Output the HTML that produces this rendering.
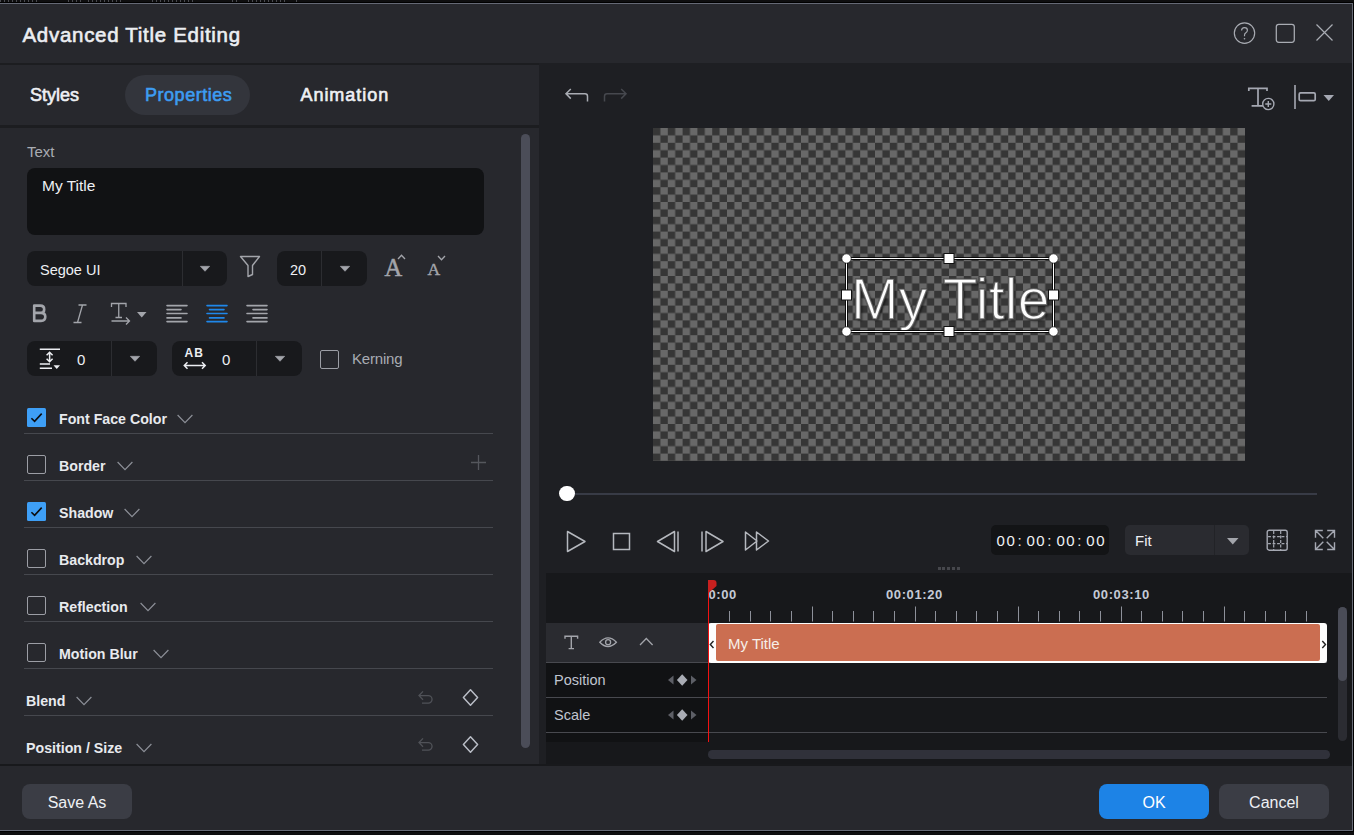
<!DOCTYPE html>
<html><head><meta charset="utf-8">
<style>
*{box-sizing:border-box;margin:0;padding:0}
html,body{width:1354px;height:835px;overflow:hidden;background:#0e0e0f}
body{position:relative;font-family:"Liberation Sans",sans-serif;color:#e6e8ee}
.a{position:absolute}
.t{line-height:1;white-space:nowrap}
svg{position:absolute;overflow:visible}
</style></head><body>
<div class="a" style="left:0;top:2px;width:1354px;height:830px;background:#000"></div>
<div class="a" style="left:0;top:0;width:340px;height:2px;background:repeating-linear-gradient(90deg,#4a4b50 0 1px,transparent 1px 4px);-webkit-mask:linear-gradient(90deg,#000 0 38px,transparent 38px 66px,#000 66px 84px,transparent 84px 86px,#000 86px 124px,transparent 124px 152px,#000 152px 196px,transparent 196px 230px,#000 230px 238px,transparent 238px 246px,#000 246px 287px,transparent 287px 294px,#000 294px 298px,transparent 298px)"></div>

<div class="a" style="left:0;top:3px;width:1353px;height:828px;background:#656975"></div>
<div class="a" style="left:0;top:4px;width:1352px;height:59px;background:#27282d"></div>
<div class="a t" style="left:22.5px;top:24.8px;font-size:20.5px;-webkit-text-stroke:0.6px #eceef2;color:#eceef2;letter-spacing:0.7px">Advanced Title Editing</div>
<svg style="left:1233px;top:21.6px" width="23" height="23"><circle cx="11.5" cy="11.1" r="10.2" fill="none" stroke="#a9acb3" stroke-width="1.15"/><path d="M8.6 8.6 Q8.6 5.6 11.5 5.6 Q14.4 5.6 14.4 8.3 Q14.4 10 12.6 11 Q11.5 11.6 11.5 13.4 V14.2" fill="none" stroke="#a9acb3" stroke-width="1.15"/><circle cx="11.5" cy="16.8" r="0.8" fill="#a9acb3"/></svg>
<svg style="left:1275.3px;top:22.6px" width="21" height="21"><rect x="1.3" y="1.3" width="18" height="18" rx="2.5" fill="none" stroke="#a9acb3" stroke-width="1.25"/></svg>
<svg style="left:1315px;top:23px" width="20" height="20"><path d="M1.5 1.5 L17.5 17.5 M17.5 1.5 L1.5 17.5" stroke="#a9acb3" stroke-width="1.2"/></svg>
<div class="a" style="left:0;top:63px;width:539px;height:2px;background:#1c1d20"></div>
<div class="a" style="left:0;top:65px;width:539px;height:60px;background:#27282d"></div>
<div class="a" style="left:0;top:125px;width:539px;height:3px;background:#1c1d20"></div>
<div class="a" style="left:0;top:128px;width:539px;height:636px;background:#27282d"></div>
<div class="a" style="left:539px;top:63px;width:813px;height:701px;background:#1e1f23"></div>
<div class="a" style="left:0;top:764px;width:1352px;height:2px;background:#18191c"></div>
<div class="a" style="left:0;top:766px;width:1352px;height:64px;background:#27282d"></div>
<div class="a" style="left:125px;top:75px;width:125px;height:40px;border-radius:20px;background:#33353c"></div>
<div class="a t" style="left:30px;top:86px;font-size:18px;-webkit-text-stroke:0.6px #eef0f4;color:#eef0f4">Styles</div>
<div class="a t" style="left:145px;top:86px;font-size:18px;-webkit-text-stroke:0.6px #3d9cf2;letter-spacing:0.53px;color:#3d9cf2">Properties</div>
<div class="a t" style="left:300.5px;top:86px;font-size:18px;-webkit-text-stroke:0.6px #eef0f4;letter-spacing:0.95px;color:#eef0f4">Animation</div>
<div class="a t" style="left:27px;top:144px;font-size:15px;color:#a9acb3">Text</div>
<div class="a" style="left:27px;top:168px;width:457px;height:67px;border-radius:8px;background:#111214"></div>
<div class="a t" style="left:42px;top:177.8px;font-size:15.5px;color:#eef0f4">My Title</div>
<div class="a" style="left:521px;top:134px;width:9px;height:614px;border-radius:4.5px;background:#4b4d58"></div>
<div class="a" style="left:27px;top:408px;width:19px;height:19px;border-radius:1.5px;background:#3e9ff6"></div>
<svg style="left:27px;top:408px" width="19" height="19"><path d="M4.4 10.2 L7.6 13.3 L14.7 5.6" fill="none" stroke="#0c0d10" stroke-width="1.6"/></svg>
<div class="a t" style="left:59px;top:411.5px;font-size:14.2px;font-weight:700;color:#e8eaee">Font Face Color</div>
<svg style="left:177px;top:413.6px" width="16" height="10"><path d="M0.6 1 L8 8.6 L15.4 1" fill="none" stroke="#8c8f97" stroke-width="1.2"/></svg>
<div class="a" style="left:24px;top:433px;width:469px;height:1px;background:#46484e"></div>
<div class="a" style="left:27px;top:455px;width:19px;height:19px;border-radius:2px;border:1.5px solid #9c9ea5"></div>
<div class="a t" style="left:59px;top:458.5px;font-size:14.2px;font-weight:700;color:#e8eaee">Border</div>
<svg style="left:117px;top:460.6px" width="16" height="10"><path d="M0.6 1 L8 8.6 L15.4 1" fill="none" stroke="#8c8f97" stroke-width="1.2"/></svg>
<div class="a" style="left:24px;top:480px;width:469px;height:1px;background:#46484e"></div>
<div class="a" style="left:27px;top:502px;width:19px;height:19px;border-radius:1.5px;background:#3e9ff6"></div>
<svg style="left:27px;top:502px" width="19" height="19"><path d="M4.4 10.2 L7.6 13.3 L14.7 5.6" fill="none" stroke="#0c0d10" stroke-width="1.6"/></svg>
<div class="a t" style="left:59px;top:505.5px;font-size:14.2px;font-weight:700;color:#e8eaee">Shadow</div>
<svg style="left:124px;top:507.6px" width="16" height="10"><path d="M0.6 1 L8 8.6 L15.4 1" fill="none" stroke="#8c8f97" stroke-width="1.2"/></svg>
<div class="a" style="left:24px;top:527px;width:469px;height:1px;background:#46484e"></div>
<div class="a" style="left:27px;top:549px;width:19px;height:19px;border-radius:2px;border:1.5px solid #9c9ea5"></div>
<div class="a t" style="left:59px;top:552.5px;font-size:14.2px;font-weight:700;color:#e8eaee">Backdrop</div>
<svg style="left:135.5px;top:554.6px" width="16" height="10"><path d="M0.6 1 L8 8.6 L15.4 1" fill="none" stroke="#8c8f97" stroke-width="1.2"/></svg>
<div class="a" style="left:24px;top:574px;width:469px;height:1px;background:#46484e"></div>
<div class="a" style="left:27px;top:596px;width:19px;height:19px;border-radius:2px;border:1.5px solid #9c9ea5"></div>
<div class="a t" style="left:59px;top:599.5px;font-size:14.2px;font-weight:700;color:#e8eaee">Reflection</div>
<svg style="left:140px;top:601.6px" width="16" height="10"><path d="M0.6 1 L8 8.6 L15.4 1" fill="none" stroke="#8c8f97" stroke-width="1.2"/></svg>
<div class="a" style="left:24px;top:621px;width:469px;height:1px;background:#46484e"></div>
<div class="a" style="left:27px;top:643px;width:19px;height:19px;border-radius:2px;border:1.5px solid #9c9ea5"></div>
<div class="a t" style="left:59px;top:646.5px;font-size:14.2px;font-weight:700;color:#e8eaee">Motion Blur</div>
<svg style="left:152.5px;top:648.6px" width="16" height="10"><path d="M0.6 1 L8 8.6 L15.4 1" fill="none" stroke="#8c8f97" stroke-width="1.2"/></svg>
<div class="a" style="left:24px;top:668px;width:469px;height:1px;background:#46484e"></div>
<div class="a t" style="left:26px;top:693.5px;font-size:14.2px;font-weight:700;color:#e8eaee">Blend</div>
<svg style="left:75.5px;top:695.6px" width="16" height="10"><path d="M0.6 1 L8 8.6 L15.4 1" fill="none" stroke="#8c8f97" stroke-width="1.2"/></svg>
<div class="a" style="left:24px;top:715px;width:469px;height:1px;background:#46484e"></div>
<div class="a t" style="left:26px;top:740.5px;font-size:14.2px;font-weight:700;color:#e8eaee">Position / Size</div>
<svg style="left:135.5px;top:742.6px" width="16" height="10"><path d="M0.6 1 L8 8.6 L15.4 1" fill="none" stroke="#8c8f97" stroke-width="1.2"/></svg>

<svg style="left:470px;top:454px" width="17" height="17"><path d="M8.5 1 V16 M1 8.5 H16" stroke="#55575d" stroke-width="1.3"/></svg>
<svg style="left:417px;top:689.5px" width="20" height="16"><path d="M2.2 5.6 H11.3 A3.75 3.75 0 0 1 11.3 13.1 H5 M6 1.4 L2 5.6 L6 9.8" fill="none" stroke="#505258" stroke-width="1.3"/></svg>
<svg style="left:461px;top:688px" width="19" height="19"><path d="M9.5 1.8 L16.6 9.5 L9.5 17.2 L2.4 9.5 Z" fill="none" stroke="#b9bdc6" stroke-width="1.5" stroke-linejoin="round"/></svg>
<svg style="left:417px;top:736.5px" width="20" height="16"><path d="M2.2 5.6 H11.3 A3.75 3.75 0 0 1 11.3 13.1 H5 M6 1.4 L2 5.6 L6 9.8" fill="none" stroke="#505258" stroke-width="1.3"/></svg>
<svg style="left:461px;top:735px" width="19" height="19"><path d="M9.5 1.8 L16.6 9.5 L9.5 17.2 L2.4 9.5 Z" fill="none" stroke="#b9bdc6" stroke-width="1.5" stroke-linejoin="round"/></svg>

<div class="a" style="left:27px;top:251px;width:200px;height:35px;border-radius:8px;background:#18191c"></div>
<div class="a" style="left:182px;top:251px;width:1px;height:35px;background:#2c2d31"></div>
<div class="a t" style="left:40px;top:262.5px;font-size:14.5px;color:#eef0f4">Segoe UI</div>
<svg style="left:200px;top:265.9px" width="10" height="6"><path d="M0.3 0.3 H9.7 L5 5.3 Z" fill="#a3a5ab" stroke="#a3a5ab" stroke-width="0.6" stroke-linejoin="round"/></svg>
<svg style="left:239px;top:255px" width="23" height="24"><path d="M1.5 1.5 H20.5 L13.5 10.5 V19.5 L9 21.5 V10.5 Z" fill="none" stroke="#a3a5ab" stroke-width="1.4" stroke-linejoin="round"/></svg>
<div class="a" style="left:277px;top:251px;width:90px;height:35px;border-radius:8px;background:#18191c"></div>
<div class="a" style="left:321px;top:251px;width:1px;height:35px;background:#2c2d31"></div>
<div class="a t" style="left:290px;top:262.5px;font-size:14.5px;color:#eef0f4">20</div>
<svg style="left:339.5px;top:265.9px" width="10" height="6"><path d="M0.3 0.3 H9.7 L5 5.3 Z" fill="#a3a5ab" stroke="#a3a5ab" stroke-width="0.6" stroke-linejoin="round"/></svg>
<div class="a t" style="left:384.5px;top:255.5px;font-family:'Liberation Serif',serif;font-size:24.5px;font-weight:400;-webkit-text-stroke:0.5px #a3a5ab;color:#a3a5ab">A</div>
<svg style="left:397px;top:254px" width="9" height="6"><path d="M1 5 L4.5 1.2 L8 5" fill="none" stroke="#a3a5ab" stroke-width="1.3"/></svg>
<div class="a t" style="left:427.5px;top:260.5px;font-family:'Liberation Serif',serif;font-size:17.5px;font-weight:400;-webkit-text-stroke:0.4px #a3a5ab;color:#a3a5ab">A</div>
<svg style="left:437px;top:255px" width="9" height="6"><path d="M1 1 L4.5 4.8 L8 1" fill="none" stroke="#a3a5ab" stroke-width="1.3"/></svg>
<svg style="left:32px;top:304px" width="16" height="20"><path d="M2.2 1.6 H8.2 Q12.2 1.6 12.2 5.4 Q12.2 8.9 8.4 8.9 H2.2 Z M2.2 8.9 H9 Q13.3 8.9 13.3 12.8 Q13.3 16.9 9 16.9 H2.2 Z" fill="none" stroke="#a3a5ab" stroke-width="2.6" stroke-linejoin="round"/></svg>
<svg style="left:72px;top:304px" width="16" height="20"><path d="M6.5 1 H14.5 M1.5 18.5 H9.5 M10.5 1 L5.5 18.5" fill="none" stroke="#a3a5ab" stroke-width="1.3"/></svg>
<svg style="left:110px;top:302px" width="22" height="24"><path d="M1.5 5 V1.5 H16 V5 M8.75 1.5 V15.5 M5.5 15.5 H12 M1.5 19 H19.5 M16 15.5 L19.5 19 L16 22.5" fill="none" stroke="#a3a5ab" stroke-width="1.3"/></svg>
<svg style="left:137px;top:312px" width="10" height="6"><path d="M0 0 H9.5 L4.75 5.5 Z" fill="#a3a5ab"/></svg>
<svg style="left:167px;top:303px" width="21" height="22"><path d="M0 2.6 H20 M0 6.6 H14 M0 10.5 H20 M0 14.9 H14 M0 18.6 H20" stroke="#a3a5ab" stroke-width="1.6" stroke-linecap="round"/></svg>
<svg style="left:207px;top:303px" width="21" height="22"><path d="M0 2.6 H20 M2.5 6.6 H17 M0 10.5 H20 M2.5 14.9 H17 M0 18.6 H20" stroke="#1f87ea" stroke-width="1.6" stroke-linecap="round"/></svg>
<svg style="left:247px;top:303px" width="21" height="22"><path d="M0 2.6 H20 M6 6.6 H20 M0 10.5 H20 M6 14.9 H20 M0 18.6 H20" stroke="#a3a5ab" stroke-width="1.6" stroke-linecap="round"/></svg>
<div class="a" style="left:27px;top:341px;width:130px;height:35px;border-radius:8px;background:#18191c"></div>
<div class="a" style="left:111px;top:341px;width:1px;height:35px;background:#2c2d31"></div>
<svg style="left:130px;top:355.9px" width="10" height="6"><path d="M0.3 0.3 H9.7 L5 5.3 Z" fill="#a3a5ab" stroke="#a3a5ab" stroke-width="0.6" stroke-linejoin="round"/></svg>
<svg style="left:38px;top:347px" width="24" height="24"><path d="M1.8 2.3 H22 M11.6 5.5 V14.5 M8.6 8.2 L11.6 5.2 L14.6 8.2 M8.6 11.8 L11.6 14.8 L14.6 11.8 M1.8 17 H12 M1.8 21.2 H14" fill="none" stroke="#eceef2" stroke-width="1.5"/><path d="M15.5 18.3 H22 L18.75 22 Z" fill="#eceef2"/></svg>
<div class="a t" style="left:77px;top:352px;font-size:15px;color:#eef0f4">0</div>
<div class="a" style="left:172px;top:341px;width:130px;height:35px;border-radius:8px;background:#18191c"></div>
<div class="a" style="left:256px;top:341px;width:1px;height:35px;background:#2c2d31"></div>
<svg style="left:275px;top:355.9px" width="10" height="6"><path d="M0.3 0.3 H9.7 L5 5.3 Z" fill="#a3a5ab" stroke="#a3a5ab" stroke-width="0.6" stroke-linejoin="round"/></svg>
<div class="a t" style="left:184.5px;top:347px;font-size:12px;font-weight:700;letter-spacing:1px;color:#eceef2">AB</div>
<svg style="left:183px;top:361px" width="24" height="9"><path d="M1.5 4.5 H22 M4.5 1.3 L1.3 4.5 L4.5 7.7 M19 1.3 L22.2 4.5 L19 7.7" fill="none" stroke="#eceef2" stroke-width="1.5"/></svg>
<div class="a t" style="left:222px;top:352px;font-size:15px;color:#eef0f4">0</div>
<div class="a" style="left:320px;top:349.5px;width:19px;height:19px;border-radius:2px;border:1.5px solid #9c9ea5"></div>
<div class="a t" style="left:352px;top:351px;font-size:15px;letter-spacing:-0.2px;color:#a9acb3">Kerning</div>

<svg style="left:564px;top:86px" width="26" height="17"><path d="M2 7.8 H21 Q23.5 7.8 23.5 10.3 V15.5 M6.8 3 L2 7.8 L6.8 12.6" fill="none" stroke="#a9acb3" stroke-width="1.5"/></svg>
<svg style="left:602px;top:86px" width="26" height="17"><path d="M24 7.8 H5 Q2.5 7.8 2.5 10.3 V15.5 M19.2 3 L24 7.8 L19.2 12.6" fill="none" stroke="#46484e" stroke-width="1.5"/></svg>
<svg style="left:1247px;top:86px" width="30" height="26"><path d="M1.8 5 V2.3 H20 V5 M11 2.3 V19.9 M4.6 19.9 H16" fill="none" stroke="#a5a8b2" stroke-width="1.7"/><circle cx="21.3" cy="18" r="5.6" fill="#1e1f23" stroke="#a5a8b2" stroke-width="1.4"/><path d="M21.3 15 V21 M18.3 18 H24.3" stroke="#a5a8b2" stroke-width="1.4"/></svg>
<svg style="left:1293px;top:84px" width="42" height="26"><path d="M2 1 V25" stroke="#a5a8b2" stroke-width="1.6"/><rect x="6.2" y="8.9" width="16" height="7.8" rx="1.3" fill="none" stroke="#a5a8b2" stroke-width="1.7"/><path d="M30.5 11 H41 L35.75 17 Z" fill="#a5a8b2"/></svg>
<svg style="left:653px;top:128px" width="592" height="333" viewBox="0 0 80 45" preserveAspectRatio="none"><defs><pattern id="ck" width="2" height="2" patternUnits="userSpaceOnUse"><rect width="2" height="2" fill="#363636"/><rect x="1" width="1" height="1" fill="#686868"/><rect y="1" width="1" height="1" fill="#686868"/></pattern></defs><rect width="80" height="45" fill="url(#ck)"/></svg>
<div class="a t" style="left:851px;top:270.5px;font-size:57px;color:#fdfdfd;letter-spacing:0.3px;-webkit-text-stroke:1.6px rgba(70,70,70,0.75);text-shadow:2px 2px 2px rgba(0,0,0,0.45)">My Title</div>
<svg style="left:835px;top:248px" width="230" height="95"><rect x="11.5" y="10.5" width="207" height="73" fill="none" stroke="#000" stroke-opacity="0.85" stroke-width="3"/><rect x="11.5" y="10.5" width="207" height="73" fill="none" stroke="#fff" stroke-width="1"/><circle cx="11.5" cy="10.5" r="4.7" fill="#fff" stroke="#111" stroke-width="0.7"/><circle cx="218.5" cy="10.5" r="4.7" fill="#fff" stroke="#111" stroke-width="0.7"/><circle cx="11.5" cy="83.5" r="4.7" fill="#fff" stroke="#111" stroke-width="0.7"/><circle cx="218.5" cy="83.5" r="4.7" fill="#fff" stroke="#111" stroke-width="0.7"/><rect x="109" y="5.5" width="10" height="10" fill="#fff" stroke="#111" stroke-width="1"/><rect x="109" y="78.5" width="10" height="10" fill="#fff" stroke="#111" stroke-width="1"/><rect x="6.5" y="42" width="10" height="10" fill="#fff" stroke="#111" stroke-width="1"/><rect x="213.5" y="42" width="10" height="10" fill="#fff" stroke="#111" stroke-width="1"/></svg>
<div class="a" style="left:567px;top:492.5px;width:750px;height:2px;background:#383b46"></div>
<div class="a" style="left:559.3px;top:485.8px;width:15.4px;height:15.4px;border-radius:50%;background:#fff"></div>
<svg style="left:565px;top:529px" width="24" height="26"><path d="M2.5 2.5 L20 12.5 L2.5 22.5 Z" fill="none" stroke="#b5b8be" stroke-width="1.5" stroke-linejoin="round"/></svg>
<svg style="left:611px;top:531px" width="21" height="21"><rect x="2.5" y="2.5" width="16" height="16" fill="none" stroke="#b5b8be" stroke-width="1.5"/></svg>
<svg style="left:655px;top:529px" width="26" height="26"><path d="M23 2.5 V22.5 M19.5 2.5 L2.5 12.5 L19.5 22.5 Z" fill="none" stroke="#b5b8be" stroke-width="1.5" stroke-linejoin="round"/></svg>
<svg style="left:699px;top:529px" width="26" height="26"><path d="M3 2.5 V22.5 M7 2.5 L24 12.5 L7 22.5 Z" fill="none" stroke="#b5b8be" stroke-width="1.5" stroke-linejoin="round"/></svg>
<svg style="left:743px;top:530px" width="30" height="24"><path d="M2.5 2 L14 11 L2.5 20 Z M13.5 2 L25.5 11 L13.5 20 Z" fill="none" stroke="#b5b8be" stroke-width="1.5" stroke-linejoin="round"/></svg>
<div class="a" style="left:991px;top:525px;width:118px;height:30px;border-radius:5px;background:#131416"></div>
<div class="a t" style="left:996.6px;top:533px;font-size:15px;letter-spacing:1.5px;color:#eef0f4">00</div>
<div class="a t" style="left:1017.4px;top:533px;font-size:15px;color:#eef0f4">:</div>
<div class="a t" style="left:1026.5px;top:533px;font-size:15px;letter-spacing:1.5px;color:#eef0f4">00</div>
<div class="a t" style="left:1047.3px;top:533px;font-size:15px;color:#eef0f4">:</div>
<div class="a t" style="left:1056.4px;top:533px;font-size:15px;letter-spacing:1.5px;color:#eef0f4">00</div>
<div class="a t" style="left:1077.2px;top:533px;font-size:15px;color:#eef0f4">:</div>
<div class="a t" style="left:1086.3px;top:533px;font-size:15px;letter-spacing:1.5px;color:#eef0f4">00</div>
<div class="a" style="left:1125px;top:525px;width:124px;height:30px;border-radius:5px;background:#2a2b30"></div>
<div class="a" style="left:1214px;top:525px;width:1px;height:30px;background:#222327"></div>
<div class="a t" style="left:1135px;top:532.5px;font-size:15px;color:#eef0f4">Fit</div>
<svg style="left:1226.5px;top:537.5px" width="12" height="7"><path d="M0 0 H11.5 L5.75 6.5 Z" fill="#a3a5ab"/></svg>
<svg style="left:1266px;top:529px" width="23" height="23"><rect x="1.2" y="1.2" width="20" height="20" rx="2" fill="none" stroke="#a5a8b2" stroke-width="1.4"/><path d="M7.7 1.5 V21 M14.7 1.5 V21 M1.5 7.7 H21 M1.5 14.7 H21" stroke="#a5a8b2" stroke-width="1.2" stroke-dasharray="2.8 1.7" stroke-dashoffset="-0.6"/></svg>
<svg style="left:1314px;top:529px" width="23" height="23"><path d="M1.5 8.8 V1.5 H8.8 M1.5 1.5 L9.3 9.3 M20.5 8.8 V1.5 H13.2 M20.5 1.5 L12.7 9.3 M1.5 13.2 V20.5 H8.8 M1.5 20.5 L9.3 12.7 M20.5 13.2 V20.5 H13.2 M20.5 20.5 L12.7 12.7" fill="none" stroke="#a5a8b2" stroke-width="1.4"/></svg>
<div class="a" style="left:937.5px;top:567px;width:3px;height:3px;background:#46474c"></div>
<div class="a" style="left:942.4px;top:567px;width:3px;height:3px;background:#46474c"></div>
<div class="a" style="left:947.3px;top:567px;width:3px;height:3px;background:#46474c"></div>
<div class="a" style="left:952.2px;top:567px;width:3px;height:3px;background:#46474c"></div>
<div class="a" style="left:957.1px;top:567px;width:3px;height:3px;background:#46474c"></div>

<div class="a" style="left:546px;top:573px;width:806px;height:191px;background:#17181b"></div>
<div class="a" style="left:546px;top:623px;width:162px;height:39px;background:#2a2b30"></div>
<div class="a" style="left:546px;top:662px;width:162px;height:80px;background:#111214"></div>
<div class="a" style="left:546px;top:662px;width:781px;height:1px;background:#48494f"></div>
<div class="a" style="left:546px;top:697px;width:781px;height:1px;background:#48494f"></div>
<div class="a" style="left:546px;top:732px;width:781px;height:1px;background:#48494f"></div>
<svg style="left:546px;top:573px" width="806" height="60"><path d="M183.5 38 V48.5 M204.5 38 V48.5 M224.5 38 V48.5 M245.5 38 V48.5 M266.5 33.5 V48.5 M286.5 38 V48.5 M307.5 38 V48.5 M327.5 38 V48.5 M348.5 38 V48.5 M369.5 33.5 V48.5 M389.5 38 V48.5 M410.5 38 V48.5 M430.5 38 V48.5 M451.5 38 V48.5 M472.5 33.5 V48.5 M492.5 38 V48.5 M513.5 38 V48.5 M533.5 38 V48.5 M554.5 38 V48.5 M575.5 33.5 V48.5 M595.5 38 V48.5 M616.5 38 V48.5 M636.5 38 V48.5 M657.5 38 V48.5 M678.5 33.5 V48.5 M698.5 38 V48.5 M719.5 38 V48.5 M739.5 38 V48.5 M760.5 38 V48.5" stroke="#8d909a" stroke-width="1"/></svg>
<div class="a t" style="left:708px;top:587.5px;width:40px;overflow:hidden;white-space:nowrap"><div style="margin-left:-28px;font-size:13px;font-weight:700;letter-spacing:0.6px;color:#c5cad6">00:00:00</div></div>
<div class="a t" style="left:886px;top:587.5px;font-size:13px;font-weight:700;letter-spacing:0.6px;color:#c5cad6">00:01:20</div>
<div class="a t" style="left:1093px;top:587.5px;font-size:13px;font-weight:700;letter-spacing:0.6px;color:#c5cad6">00:03:10</div>
<div class="a" style="left:708px;top:623px;width:619px;height:40px;border-radius:3px;background:#fdfdfd"></div>
<div class="a" style="left:716px;top:624px;width:604px;height:37px;border-radius:2px;background:#cb6e51"></div>
<svg style="left:709px;top:640px" width="6" height="9"><path d="M4.5 1 L1.3 4.5 L4.5 8" fill="none" stroke="#222" stroke-width="1.4"/></svg>
<svg style="left:1320.5px;top:640px" width="6" height="9"><path d="M1.3 1 L4.5 4.5 L1.3 8" fill="none" stroke="#222" stroke-width="1.4"/></svg>
<div class="a t" style="left:728px;top:635.5px;font-size:15px;color:#f6eee8">My Title</div>
<svg style="left:564px;top:635px" width="15" height="15"><path d="M1 3.8 V1.3 H13.6 V3.8 M7.3 1.3 V13.6 M4.6 13.6 H10" fill="none" stroke="#a3a5ab" stroke-width="1.4"/></svg>
<svg style="left:599px;top:636px" width="19" height="13"><path d="M0.8 6.2 Q9 -2.4 17.4 6.2 Q9 14.8 0.8 6.2 Z" fill="none" stroke="#a3a5ab" stroke-width="1.3"/><circle cx="9.1" cy="6.2" r="2.5" fill="none" stroke="#a3a5ab" stroke-width="1.3"/></svg>
<svg style="left:639px;top:637px" width="15" height="10"><path d="M1 8 L7.3 1.5 L13.6 8" fill="none" stroke="#a3a5ab" stroke-width="1.3"/></svg>
<div class="a t" style="left:554px;top:673.2px;font-size:14.5px;color:#c0c5d0">Position</div>
<svg style="left:666px;top:674.0px" width="32" height="12"><path d="M7.5 1.5 V10.5 L2 6 Z" fill="#5d5f66"/><path d="M25 1.5 V10.5 L30.5 6 Z" fill="#5d5f66"/><path d="M16.2 0.3 L21.5 6 L16.2 11.7 L10.9 6 Z" fill="#a9acb4"/></svg>
<div class="a t" style="left:554px;top:708.2px;font-size:14.5px;color:#c0c5d0">Scale</div>
<svg style="left:666px;top:709.0px" width="32" height="12"><path d="M7.5 1.5 V10.5 L2 6 Z" fill="#5d5f66"/><path d="M25 1.5 V10.5 L30.5 6 Z" fill="#5d5f66"/><path d="M16.2 0.3 L21.5 6 L16.2 11.7 L10.9 6 Z" fill="#a9acb4"/></svg>
<div class="a" style="left:708px;top:583px;width:1.4px;height:159px;background:#f21212"></div>
<svg style="left:708px;top:579.5px" width="9" height="14"><path d="M0 0 H5.5 Q8.5 0 8.5 3 V6 L0 13.5 Z" fill="#c8201f"/></svg>
<div class="a" style="left:1338px;top:607px;width:9px;height:134px;border-radius:4.5px;background:#2b2c32"></div>
<div class="a" style="left:1338px;top:607px;width:9px;height:74px;border-radius:4.5px;background:#4a4c57"></div>
<div class="a" style="left:708px;top:750px;width:622px;height:8.5px;border-radius:4.25px;background:#30313a"></div>

<div class="a" style="left:22px;top:784px;width:110px;height:35px;border-radius:8px;background:#3b3d45"></div>
<div class="a t" style="left:22px;top:794.5px;width:110px;text-align:center;font-size:16px;color:#eef0f4">Save As</div>
<div class="a" style="left:1099px;top:784px;width:110px;height:35px;border-radius:8px;background:#1d83e6"></div>
<div class="a t" style="left:1099px;top:794.5px;width:110px;text-align:center;font-size:16px;color:#ffffff">OK</div>
<div class="a" style="left:1219px;top:784px;width:110px;height:35px;border-radius:8px;background:#3b3d45"></div>
<div class="a t" style="left:1219px;top:794.5px;width:110px;text-align:center;font-size:16px;color:#eef0f4">Cancel</div>
</body></html>
